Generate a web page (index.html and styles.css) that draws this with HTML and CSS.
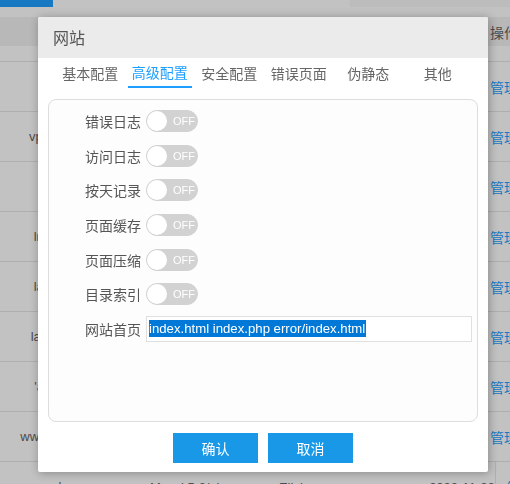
FILE: index.html
```html
<!DOCTYPE html>
<html lang="zh-CN">
<head>
    <meta charset="UTF-8">
    <title>网站设置</title>
    <link rel="stylesheet" href="styles.css">
</head>
<body>
    <!-- 背景列表页 -->
    <div class="page">
        <div class="topbar">
            <span class="add-btn"></span>
            <span class="search"></span>
        </div>
        <div class="list">
            <div class="row head"><span class="name"></span><span class="mid"></span><span class="op">操作</span></div>
            <div class="row gap"></div>
            <div class="row"><span class="name">ab.cn</span><span class="mid"></span><a class="op">管理</a></div>
            <div class="row"><span class="name">vps.test.cn</span><span class="mid"></span><a class="op">管理</a></div>
            <div class="row"><span class="name">ab.cn</span><span class="mid"></span><a class="op">管理</a></div>
            <div class="row"><span class="name">lnmp.test</span><span class="mid"></span><a class="op">管理</a></div>
            <div class="row"><span class="name">lamp.test</span><span class="mid"></span><a class="op">管理</a></div>
            <div class="row"><span class="name">lamp.local</span><span class="mid"></span><a class="op">管理</a></div>
            <div class="row"><span class="name">'abc.com</span><span class="mid"></span><a class="op">管理</a></div>
            <div class="row"><span class="name">www.site.com</span><span class="mid"></span><a class="op">管理</a></div>
            <div class="row"><span class="name">l</span>
                <span class="mid"><i>Mysql 5.6/php</i><i>Elixir</i><i>正常</i><i>2022-11-22</i></span>
                <a class="op">管理</a></div>
        </div>
    </div>

    <div class="shade"></div>

    <!-- 弹出层 -->
    <div class="dialog">
        <div class="dialog-title">网站</div>
        <ul class="tabs">
            <li>基本配置</li>
            <li class="on">高级配置</li>
            <li>安全配置</li>
            <li>错误页面</li>
            <li>伪静态</li>
            <li>其他</li>
        </ul>
        <div class="panel">
            <div class="item"><label>错误日志</label><span class="switch"><em>OFF</em></span></div>
            <div class="item"><label>访问日志</label><span class="switch"><em>OFF</em></span></div>
            <div class="item"><label>按天记录</label><span class="switch"><em>OFF</em></span></div>
            <div class="item"><label>页面缓存</label><span class="switch"><em>OFF</em></span></div>
            <div class="item"><label>页面压缩</label><span class="switch"><em>OFF</em></span></div>
            <div class="item"><label>目录索引</label><span class="switch"><em>OFF</em></span></div>
            <div class="item"><label>网站首页</label><div class="field"><span class="sel">index.html index.php error/index.html</span></div></div>
        </div>
        <div class="btns">
            <a class="btn">确认</a>
            <a class="btn">取消</a>
        </div>
    </div>
</body>
</html>
```

FILE: styles.css
```css
*{
    margin:0;
    padding:0;
    box-sizing:border-box;
    text-decoration:none;
    list-style:none;
}

body{
    width:510px;
    height:484px;
    overflow:hidden;
    position:relative;
    background:#fff;
    font-family:"Liberation Sans","Noto Sans CJK SC",sans-serif;
    font-size:14px;
    color:#666;
}

.page{
    height:484px;
    overflow:hidden;
}

/* 背景页 */
.topbar{
    height:17px;
    display:flex;
    justify-content:space-between;
    align-items:flex-start;
}

.add-btn{
    width:53px;
    height:7px;
    background:#1e9fff;
}

.search{
    width:160px;
    height:7px;
    background:#f7f7f7;
}

.row{
    height:50px;
    display:grid;
    grid-template-columns:120px 1fr 32px;
    align-items:center;
    border-bottom:1px solid #e6e6e6;
    font-size:13px;
}

.row.head{
    height:29px;
    background:#f2f2f2;
    border-bottom:none;
    font-size:14px;
}

.row.gap{
    height:16px;
}

.row .name{
    text-align:center;
    white-space:nowrap;
    overflow:hidden;
}

.row .op{
    padding-left:11px;
    white-space:nowrap;
    color:#1e9fff;
    font-size:14px;
    border-left:1px solid #e6e6e6;
    height:100%;
    display:flex;
    align-items:center;
}

.row.head .op{
    color:#666;
}

.row .mid{
    display:flex;
    gap:48px;
    padding-left:30px;
    padding-top:6px;
    white-space:nowrap;
}

.row .mid i{
    font-style:normal;
}

.shade{
    position:fixed;
    top:0;
    left:0;
    right:0;
    bottom:0;
    background:rgba(0,0,0,.24);
}

/* 弹出层 */
.dialog{
    position:absolute;
    left:38px;
    top:17px;
    width:450px;
    height:455px;
    background:#fff;
    border-radius:2px;
    box-shadow:1px 1px 10px rgba(0,0,0,.3);
    font-family:"Noto Sans CJK SC","Liberation Sans",sans-serif;
}

.dialog-title{
    height:41px;
    line-height:41px;
    padding-left:15px;
    background:#ebebeb;
    font-size:16px;
    color:#555;
    border-radius:2px 2px 0 0;
}

.tabs{
    display:flex;
    gap:5px;
    padding-left:20px;
    height:30px;
}

.tabs li{
    width:64.5px;
    text-align:center;
    line-height:30px;
    color:#666;
    white-space:nowrap;
}

.tabs li.on{
    color:#1e9fff;
    border-bottom:2px solid #1e9fff;
    line-height:29px;
}

.panel{
    margin:11px 10px 0;
    height:323px;
    border:1px solid #ddd;
    border-radius:8px;
    background:#fdfdfd;
    padding-top:4px;
}

.item{
    height:34.6px;
    display:flex;
    align-items:center;
    gap:5px;
}

.item label{
    width:92px;
    text-align:right;
    color:#555;
    font-size:14px;
}

.switch{
    width:52px;
    height:22px;
    border-radius:11px;
    background:#d2d2d2;
    border:1px solid #d2d2d2;
    display:flex;
    align-items:center;
}

.switch:before{
    content:"";
    width:20px;
    height:20px;
    border-radius:50%;
    background:#fff;
}

.switch em{
    font-style:normal;
    font-family:"Liberation Sans",sans-serif;
    font-size:11px;
    color:#fff;
    margin-left:6px;
}

.field{
    width:326px;
    height:26px;
    border:1px solid #e0e0e0;
    background:#fff;
    padding-left:2px;
    display:flex;
    align-items:center;
}

.sel{
    background:#0078d7;
    color:#fff;
    font-family:"Liberation Sans",sans-serif;
    font-size:13.2px;
    line-height:17px;
    padding-right:1px;
    white-space:nowrap;
}

.btns{
    display:flex;
    justify-content:center;
    gap:10px;
    margin-top:11px;
}

.btn{
    width:85px;
    height:30px;
    line-height:30px;
    text-align:center;
    background:#1898e6;
    color:#fff;
    font-size:14px;
}
```
